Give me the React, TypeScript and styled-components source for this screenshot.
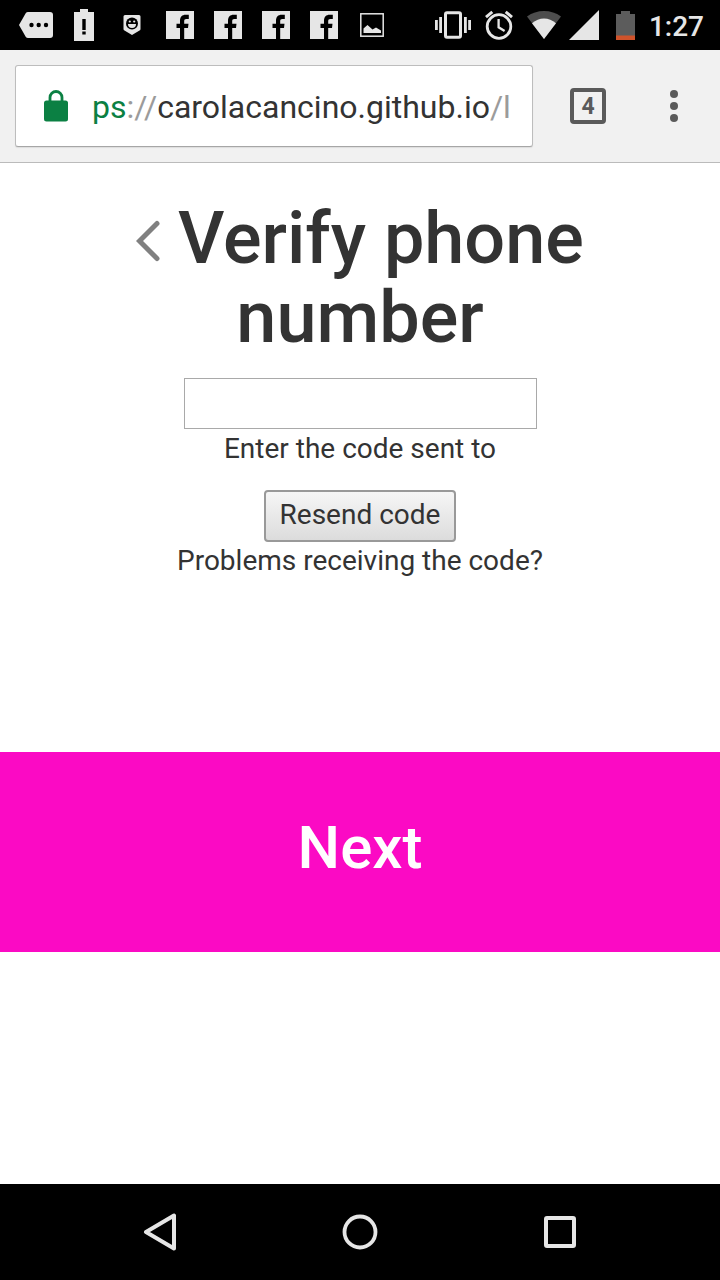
import React from 'react';
import styled, { createGlobalStyle } from 'styled-components';

const GlobalStyle = createGlobalStyle`
  *, *::before, *::after { box-sizing: border-box; }
  body {
    margin: 0;
    background: #fff;
    color: #333;
    font-family: Roboto, "Liberation Sans", sans-serif;
    font-size: 28px;
    line-height: 40px;
  }
  button, input { font: inherit; color: inherit; margin: 0; }
  svg { display: block; flex-shrink: 0; }
`;

const Screen = styled.div`
  min-height: 100vh;
  display: flex;
  flex-direction: column;
`;

const StatusBar = styled.header`
  display: flex;
  align-items: center;
  justify-content: space-between;
  height: 50px;
  padding: 0 16px 0 12px;
  background: #000;
  color: #e6e6e6;
`;

const Notifications = styled.div`
  display: flex;
`;

const SystemIcons = styled.div`
  display: flex;
  align-items: center;
`;

const IconSlot = styled.span<{ $width?: number }>`
  display: flex;
  align-items: center;
  justify-content: center;
  width: ${({ $width = 48 }) => $width}px;
  height: 50px;
`;

const Clock = styled.time`
  padding-top: 4px;
  font-size: 28px;
  font-weight: 500;
  line-height: 46px;
`;

const BrowserBar = styled.div`
  display: flex;
  align-items: center;
  height: 113px;
  padding: 0 16px 0 15px;
  background: #f1f1f1;
  border-bottom: 1px solid #bbb;
`;

const AddressBox = styled.button`
  flex: 1;
  min-width: 0;
  display: flex;
  align-items: center;
  height: 82px;
  padding: 0 20px 0 28px;
  overflow: hidden;
  background: #fff;
  border: 1px solid #bdbdbd;
  border-bottom-color: #a6a6a6;
  border-radius: 3px;
  box-shadow: 0 1px 1px #ddd;
  white-space: nowrap;
`;

const Url = styled.span`
  padding: 2px 0 0 24px;
  color: #9b9b9b;
  font-size: 32px;
  line-height: 40px;
`;

const Scheme = styled.span`
  color: #0b8043;
`;

const Host = styled.span`
  color: #333;
`;

const BarButton = styled.button<{ $width: number }>`
  display: flex;
  align-items: center;
  justify-content: center;
  width: ${({ $width }) => $width}px;
  height: 80px;
  padding: 0;
  background: none;
  border: 0;
`;

const TabCount = styled.span`
  width: 36px;
  height: 36px;
  border: 4px solid #5a5a5a;
  border-radius: 4px;
  color: #5a5a5a;
  font-size: 23px;
  font-weight: 700;
  line-height: 29px;
  text-align: center;
`;

const Page = styled.main`
  flex: 1;
`;

const VerifyForm = styled.form`
  display: flex;
  flex-direction: column;
  align-items: center;
  min-height: 589px;
  padding: 36px 30px 0;
  text-align: center;
`;

const Title = styled.h1`
  margin: 0 0 21px;
  font-size: 72px;
  font-weight: 500;
  line-height: 79px;
`;

const BackLink = styled.a`
  display: inline-block;
  padding-bottom: 1px;
  color: #808080;
`;

const CodeInput = styled.input`
  width: 353px;
  max-width: 100%;
  height: 51px;
  padding: 2px 4px;
  background: #fff;
  border: 1px solid #a9a9a9;
  border-radius: 0;
`;

const Caption = styled.label`
  margin-bottom: 21px;
`;

const ResendButton = styled.button`
  height: 52px;
  padding: 3px 14px 5px;
  background: linear-gradient(#f6f6f6, #dcdcdc);
  border: 2px solid #999;
  border-radius: 4px;
  line-height: 40px;
`;

const Help = styled.p`
  margin: 0;
  line-height: 38px;
`;

const NextButton = styled.button`
  display: block;
  width: 100%;
  height: 200px;
  padding: 0 0 8px;
  background: #fb0ac4;
  border: 0;
  color: #fff;
  font-size: 60px;
  font-weight: 500;
  line-height: 72px;
`;

const NavBar = styled.nav`
  display: grid;
  grid-template-columns: repeat(3, 200px);
  justify-content: center;
  height: 96px;
  background: #000;
`;

const NavButton = styled.button`
  display: flex;
  align-items: center;
  justify-content: center;
  padding: 0;
  background: none;
  border: 0;
  color: #e6e6e6;
`;

const MessageIcon = () => (
  <svg width="34" height="26" viewBox="0 0 34 26">
    <path d="M9 0h22a3 3 0 0 1 3 3v20a3 3 0 0 1-3 3H9q-1.500 0-2.300-1.200L0 13 6.700 1.200Q7.500 0 9 0z" fill="currentColor" />
    <circle cx="12.500" cy="13" r="2.200" />
    <circle cx="19.700" cy="13" r="2.200" />
    <circle cx="27" cy="13" r="2.200" />
  </svg>
);

const BatteryAlertIcon = () => (
  <svg width="20" height="32" viewBox="0 0 20 32">
    <path d="M6 0h8v3h6v29H0V3h6z" fill="currentColor" />
    <path d="M8.300 10h3.400v11H8.300zM8.300 22.500h3.400v3H8.300z" />
  </svg>
);

const BadgeIcon = () => (
  <svg width="18" height="20" viewBox="0 0 18 20">
    <path d="M2 0h14a1.500 1.500 0 0 1 1.500 1.500V14q0 1-1 1.600L9 20l-7.500-4.400q-1-.6-1-1.600V1.500A1.500 1.500 0 0 1 2 0z" fill="currentColor" />
    <circle cx="9" cy="8.500" r="6" />
    <path d="M5 9h8a4 4 0 0 1-8 0z" fill="currentColor" />
    <circle cx="6.800" cy="6.500" r="1.100" fill="currentColor" />
    <circle cx="11.200" cy="6.500" r="1.100" fill="currentColor" />
  </svg>
);

const FacebookIcon = () => (
  <svg width="28" height="28" viewBox="0 0 28 28">
    <rect width="28" height="28" fill="currentColor" />
    <path d="M14 28V17h-3.500v-4.200H14V9.700c0-3.800 2.200-5.900 5.600-5.900h3.200V8h-2.400c-1.700 0-2.200.8-2.200 2.200v2.600h4.300L22 17h-3.800v11z" />
  </svg>
);

const PictureIcon = () => (
  <svg width="24" height="24" viewBox="0 0 24 24">
    <rect x=".8" y=".8" width="22.400" height="22.400" fill="none" stroke="currentColor" strokeWidth="1.500" />
    <path d="M3.500 20v-4.500l4-3.500 5 4.500 3.500-2 5 3V20z" fill="currentColor" />
  </svg>
);

const VibrateIcon = () => (
  <svg width="36" height="28" viewBox="0 0 36 28" fill="currentColor">
    <rect x="10.500" y="1.800" width="15" height="24.400" rx="1.500" fill="none" stroke="currentColor" strokeWidth="3" />
    <path d="M0 9h2.800v10H0zM4.200 6H7v16H4.200zM29 6h2.800v16H29zM33.200 9H36v10h-2.800z" />
  </svg>
);

const AlarmIcon = () => (
  <svg width="28" height="30" viewBox="0 0 28 30" fill="none" stroke="currentColor">
    <circle cx="14" cy="16.500" r="11.800" strokeWidth="2.800" />
    <path d="M13.600 9v8.300l6 3.700" strokeWidth="2.300" />
    <path d="M1 7.200l6.300-5.400M27 7.200l-6.300-5.400" strokeWidth="2.900" />
  </svg>
);

const WifiIcon = () => (
  <svg width="34" height="28" viewBox="0 0 34 28">
    <path d="M0 5.500Q7.500 0 17 0t17 5.500L17 28z" fill="#4d4d4d" />
    <path d="M5 12.200Q10.500 7.500 17 7.500t12 4.700L17 28z" fill="currentColor" />
  </svg>
);

const SignalIcon = () => (
  <svg width="30" height="30" viewBox="0 0 30 30">
    <path d="M30 0v30H0z" fill="currentColor" />
  </svg>
);

const BatteryIcon = () => (
  <svg width="19" height="29" viewBox="0 0 19 29">
    <path d="M5 0h9v3h5v22H0V3h5z" fill="#5c5c5c" />
    <rect y="24.500" width="19" height="4.500" fill="#d0532b" />
  </svg>
);

const LockIcon = () => (
  <svg width="24" height="32" viewBox="0 0 24 32">
    <rect y="10.500" width="24" height="21" rx="2.500" fill="#0b8043" />
    <path d="M6 13V7.500a6 6 0 0 1 12 0V13" fill="none" stroke="#0b8043" strokeWidth="2.800" />
  </svg>
);

const MoreIcon = () => (
  <svg width="8" height="32" viewBox="0 0 8 32" fill="#5a5a5a">
    <circle cx="4" cy="4" r="4" />
    <circle cx="4" cy="16" r="4" />
    <circle cx="4" cy="28" r="4" />
  </svg>
);

const ChevronIcon = () => (
  <svg width="24" height="42" viewBox="0 0 24 42" fill="none" stroke="currentColor" strokeWidth="5" strokeLinecap="round">
    <path d="M21 3.500L3.500 21 21 38.500" />
  </svg>
);

const BackTriangleIcon = () => (
  <svg width="34" height="38" viewBox="0 0 34 38" fill="none" stroke="currentColor" strokeWidth="4" strokeLinejoin="round">
    <path d="M31 2.500v33L3 19z" />
  </svg>
);

const HomeIcon = () => (
  <svg width="36" height="36" viewBox="0 0 36 36" fill="none" stroke="currentColor" strokeWidth="3.800">
    <circle cx="18" cy="18" r="15.500" />
  </svg>
);

const RecentsIcon = () => (
  <svg width="32" height="32" viewBox="0 0 32 32" fill="none" stroke="currentColor" strokeWidth="4" strokeLinejoin="round">
    <rect x="2" y="2" width="28" height="28" rx="1" />
  </svg>
);

const notifications = [
  MessageIcon,
  BatteryAlertIcon,
  BadgeIcon,
  FacebookIcon,
  FacebookIcon,
  FacebookIcon,
  FacebookIcon,
  PictureIcon,
];

const systemIcons = [
  { Icon: VibrateIcon, width: 46 },
  { Icon: AlarmIcon, width: 46 },
  { Icon: WifiIcon, width: 44 },
  { Icon: SignalIcon, width: 36 },
  { Icon: BatteryIcon, width: 47 },
];

export default function App() {
  return (
    <>
      <GlobalStyle />
      <Screen>
        <StatusBar>
          <Notifications>
            {notifications.map((Icon, i) => (
              <IconSlot key={i}><Icon /></IconSlot>
            ))}
          </Notifications>
          <SystemIcons>
            {systemIcons.map(({ Icon, width }, i) => (
              <IconSlot key={i} $width={width}><Icon /></IconSlot>
            ))}
            <Clock>1:27</Clock>
          </SystemIcons>
        </StatusBar>

        <BrowserBar>
          <AddressBox type="button">
            <LockIcon />
            <Url><Scheme>ps</Scheme>://<Host>carolacancino.github.io</Host>/l</Url>
          </AddressBox>
          <BarButton type="button" $width={110}><TabCount>4</TabCount></BarButton>
          <BarButton type="button" $width={61} aria-label="Menu"><MoreIcon /></BarButton>
        </BrowserBar>

        <Page>
          <VerifyForm id="verify" onSubmit={(e) => e.preventDefault()}>
            <Title>
              <BackLink href="#back" aria-label="Back"><ChevronIcon /></BackLink> Verify phone number
            </Title>
            <CodeInput id="code" type="text" />
            <Caption htmlFor="code">Enter the code sent to</Caption>
            <ResendButton type="button">Resend code</ResendButton>
            <Help>Problems receiving the code?</Help>
          </VerifyForm>
          <NextButton type="submit" form="verify">Next</NextButton>
        </Page>

        <NavBar>
          <NavButton type="button" aria-label="Back"><BackTriangleIcon /></NavButton>
          <NavButton type="button" aria-label="Home"><HomeIcon /></NavButton>
          <NavButton type="button" aria-label="Recent apps"><RecentsIcon /></NavButton>
        </NavBar>
      </Screen>
    </>
  );
}
